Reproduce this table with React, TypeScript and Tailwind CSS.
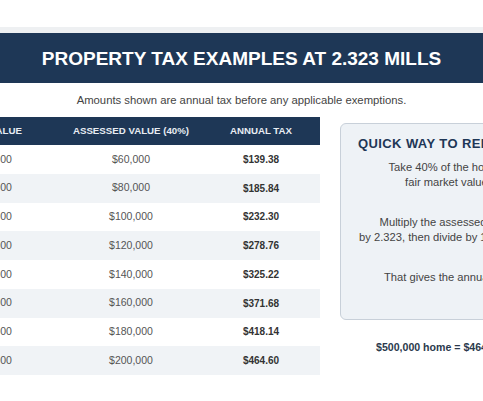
import React from "react";

type Row = { home: string; assessed: string; tax: string };

const rows: Row[] = [
  { home: "$150,000", assessed: "$60,000", tax: "$139.38" },
  { home: "$200,000", assessed: "$80,000", tax: "$185.84" },
  { home: "$250,000", assessed: "$100,000", tax: "$232.30" },
  { home: "$300,000", assessed: "$120,000", tax: "$278.76" },
  { home: "$350,000", assessed: "$140,000", tax: "$325.22" },
  { home: "$400,000", assessed: "$160,000", tax: "$371.68" },
  { home: "$450,000", assessed: "$180,000", tax: "$418.14" },
  { home: "$500,000", assessed: "$200,000", tax: "$464.60" },
];

export default function App() {
  return (
    <div className="w-[483px] h-[401px] overflow-hidden bg-white font-['Liberation_Sans',Arial,sans-serif]">
      <div className="pt-[27px]">
        <div className="h-[6px] bg-[#eef0f2]" />
        <div className="h-[50px] bg-[#1e3756] flex items-center justify-center">
          <h1 className="text-white font-bold text-[19px] leading-none whitespace-nowrap">
            PROPERTY TAX EXAMPLES AT 2.323 MILLS
          </h1>
        </div>
        <p className="mt-[10px] text-center text-[11.3px] leading-[14px] text-[#444]">
          Amounts shown are annual tax before any applicable exemptions.
        </p>

        <div className="mt-[10px] ml-[-80px] flex gap-[20px] items-start">
          {/* table */}
          <div className="w-[400px] shrink-0">
            <div className="h-[28px] bg-[#1e3756] flex items-center text-[#e8edf3] text-[9.7px] font-bold whitespace-nowrap">
              <div className="w-[140px] text-center">HOME VALUE</div>
              <div className="w-[142px] text-center">ASSESSED VALUE (40%)</div>
              <div className="w-[118px] text-center">ANNUAL TAX</div>
            </div>
            {rows.map((r, i) => (
              <div
                key={i}
                className={
                  "h-[28.75px] flex items-center whitespace-nowrap " +
                  (i % 2 === 1 ? "bg-[#f0f3f6]" : "bg-white")
                }
              >
                <div className="w-[140px] text-center text-[10.5px] text-[#555]">{r.home}</div>
                <div className="w-[142px] text-center text-[10.5px] text-[#555]">{r.assessed}</div>
                <div className="w-[118px] text-center text-[10px] font-bold text-[#333]">{r.tax}</div>
              </div>
            ))}
          </div>

          {/* side card */}
          <div className="w-[216px] shrink-0 pt-[6px]">
            <div className="h-[197px] rounded-[6px] border border-[#c8d0d9] bg-[#eef2f6] pt-[12px] whitespace-nowrap">
              <h2 className="pl-[17px] text-[13px] leading-[16px] font-bold tracking-[0.4px] text-[#1e3756]">
                QUICK WAY TO REMEMBER
              </h2>
              <div className="mt-[8px] text-center text-[11.2px] leading-[15px] text-[#444]">
                <p>Take 40% of the home's</p>
                <p>fair market value.</p>
                <p className="mt-[25px]">Multiply the assessed value</p>
                <p>by 2.323, then divide by 1,000 mills.</p>
                <p className="mt-[25px]">That gives the annual tax.</p>
              </div>
            </div>
            <p className="mt-[20px] text-center text-[10.6px] leading-[14px] font-bold text-[#2b3a4d] whitespace-nowrap">
              $500,000 home = $464.60 tax
            </p>
          </div>
        </div>
      </div>
    </div>
  );
}
